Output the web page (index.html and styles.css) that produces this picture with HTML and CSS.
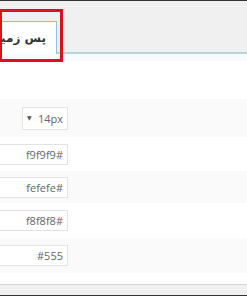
FILE: index.html
```html
<!DOCTYPE html>
<html lang="fa">
<head>
    <meta charset="UTF-8">
    <title>Background settings</title>
    <link rel="stylesheet" href="styles.css">
</head>
<body>
    <div class="topbar"></div>
    <div class="tabbar">
        <div class="tab" dir="rtl">پس زمینه</div>
        <div class="highlight"></div>
    </div>
    <div class="tint"></div>
    <div class="content">
        <div class="row band">
            <div class="select" dir="rtl"><span>14px</span><span class="arrow">▼</span></div>
        </div>
        <div class="row r2">
            <input class="field" dir="rtl" type="text" value="#f9f9f9">
        </div>
        <div class="row band r3">
            <input class="field" dir="rtl" type="text" value="#fefefe">
        </div>
        <div class="row r4">
            <input class="field" dir="rtl" type="text" value="#f8f8f8">
        </div>
        <div class="row band r5">
            <input class="field" dir="rtl" type="text" value="#555">
        </div>
    </div>
    <div class="footer"></div>
</body>
</html>
```

FILE: styles.css
```css
html, body {
    margin: 0;
    padding: 0;
}
body {
    width: 247px;
    height: 296px;
    overflow: hidden;
    background: #fff;
    font-family: "Open Sans", "DejaVu Sans", sans-serif;
}
.topbar {
    height: 1px;
    background: #333;
}
.tabbar {
    position: relative;
    height: 51px;
    background: #f0f0f0;
    border-bottom: 2px solid #bcd5dc;
    display: flex;
    align-items: flex-end;
}
.tab {
    position: relative;
    margin-left: -22px;
    margin-bottom: -2px;
    width: 79px;
    height: 33px;
    box-sizing: border-box;
    padding-right: 10px;
    background: #fff;
    border: 1px solid #86c6da;
    border-bottom: none;
    font-family: "DejaVu Sans", sans-serif;
    font-size: 12px;
    font-weight: bold;
    color: #333;
    line-height: 33px;
    text-align: right;
    white-space: nowrap;
    overflow: hidden;
}
.highlight {
    position: absolute;
    left: -1px;
    top: 8px;
    width: 64px;
    height: 53px;
    box-sizing: border-box;
    border: 3px solid #d7141e;
}
.tint {
    height: 7px;
    background: #f8fbfb;
}
.content {
    padding-top: 38px;
}
.row {
    height: 34px;
    display: flex;
    align-items: center;
}
.band {
    background: #fafafa;
    height: 38px;
}
.r2 { height: 34px; }
.r3 { height: 32px; }
.r4 { height: 35px; }
.r5 { height: 35px; }
.select {
    margin-left: 22px;
    width: 46px;
    height: 23px;
    box-sizing: border-box;
    border: 1px solid #e2e2e2;
    background: #fff;
    display: flex;
    align-items: center;
    justify-content: space-between;
    padding: 0 4px 0 4px;
    font-size: 11px;
    color: #666;
}
.select .arrow {
    font-size: 6px;
    color: #555;
}
.field {
    margin: 0 0 0 -30px;
    width: 98px;
    height: 21px;
    box-sizing: border-box;
    border: 1px solid #e2e2e2;
    background: #fff;
    padding: 0 4px;
    font-family: "Open Sans", sans-serif;
    font-size: 11px;
    color: #666;
    outline: none;
}
.footer {
    margin-top: 11px;
    height: 10px;
    background: #f0f0f0;
    border-top: 1px solid #d6d6d6;
    border-bottom: 1px solid #333;
}
```
